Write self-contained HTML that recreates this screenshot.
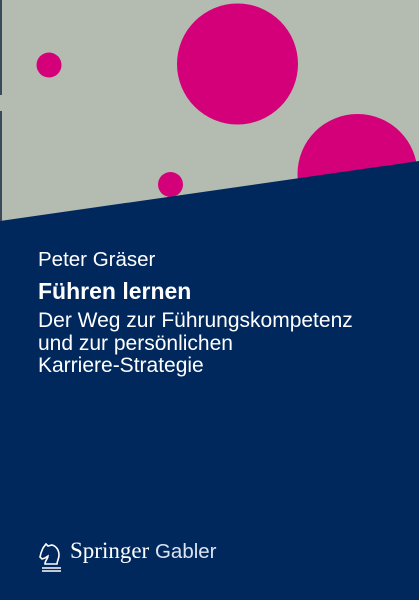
<!DOCTYPE html>
<html><head><meta charset="utf-8"><style>
body{margin:0;width:419px;height:600px;overflow:hidden;background:#00285c;font-family:"Liberation Sans",sans-serif;color:#fff;position:relative}
.t{position:absolute;left:38px;white-space:nowrap;line-height:1}
</style></head><body>
<svg width="419" height="600" style="position:absolute;left:0;top:0">
<rect x="0" y="0" width="419" height="230" fill="#b4bbb0"/>
<circle cx="49" cy="65" r="12.5" fill="#d4007a"/>
<circle cx="237.5" cy="64" r="60.5" fill="#d4007a"/>
<circle cx="170.5" cy="184.5" r="12.5" fill="#d4007a"/>
<circle cx="357.5" cy="174" r="60" fill="#d4007a"/>
<polygon points="0,221 419,161 419,600 0,600" fill="#00285c"/>
<rect x="0" y="0" width="2" height="95" fill="#3a4a5c"/>
<rect x="0" y="111" width="2" height="110" fill="#3a4a5c"/>
<g fill="none" stroke="#fff" stroke-width="1.6">
<path d="M43 548 l3-4 2 2 4-1 c4 1 7 5 7 10 c0 4-2 6-2 9 h-12 c0-4 3-5 3-8 l-3 2 -3 1 -2-2 1-4 z"/>
<line x1="42" y1="568" x2="61" y2="568"/>
<line x1="42" y1="571" x2="61" y2="571"/>
</g>
</svg>
<div class="t" style="top:250px;font-size:20.5px">Peter Gräser</div>
<div class="t" style="top:280px;font-size:23px;font-weight:bold">Führen lernen</div>
<div class="t" style="top:310px;font-size:21px;line-height:22.5px">Der Weg zur Führungskompetenz<br>und zur persönlichen<br>Karriere-Strategie</div>
<div class="t" style="left:70px;top:539px;font-size:23px;font-family:'Liberation Serif',serif">Springer <span style="font-family:'Liberation Sans',sans-serif;font-size:20.5px;color:#dbe4f2">Gabler</span></div>
</body></html>
